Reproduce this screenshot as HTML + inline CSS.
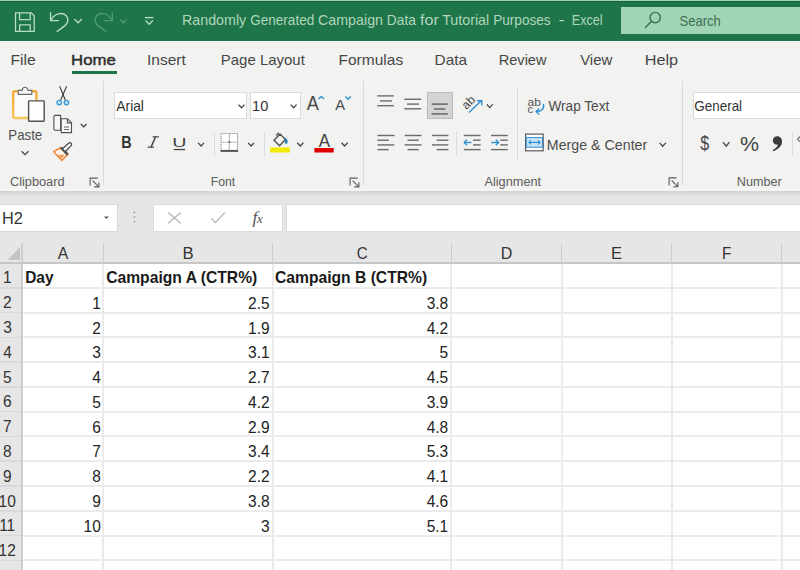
<!DOCTYPE html><html><head><meta charset="utf-8"><style>*{margin:0;padding:0;box-sizing:border-box}
html,body{width:800px;height:570px;overflow:hidden;background:#fff;font-family:"Liberation Sans",sans-serif}
svg{position:absolute;left:0;top:0;overflow:visible}
text{font-family:"Liberation Sans",sans-serif}</style></head><body>
<div style="position:absolute;left:0px;top:0px;width:800px;height:41px;background:#1e7548;"></div>
<div style="position:absolute;left:0px;top:0px;width:800px;height:1px;background:#9fd8b4;"></div>
<div style="position:absolute;left:0px;top:1px;width:800px;height:1px;background:#1a5e3a;"></div>
<div style="position:absolute;left:621px;top:7px;width:179px;height:27px;background:#a0d4b4;"></div>
<div style="position:absolute;left:0px;top:41px;width:800px;height:149.5px;background:#f2f2f1;"></div>
<div style="position:absolute;left:0px;top:188.8px;width:800px;height:1.6999999999999886px;background:#f7f7f5;"></div>
<div style="position:absolute;left:72px;top:71px;width:44.5px;height:3px;background:#1e7548;"></div>
<div style="position:absolute;left:103.0px;top:81px;width:1.0px;height:104px;background:#d9d9d9;"></div>
<div style="position:absolute;left:362.5px;top:81px;width:1.0px;height:104px;background:#d9d9d9;"></div>
<div style="position:absolute;left:682.0px;top:81px;width:1.0px;height:104px;background:#d9d9d9;"></div>
<div style="position:absolute;left:213.5px;top:132.5px;width:1.0px;height:23.0px;background:#dcdcdc;"></div>
<div style="position:absolute;left:263.5px;top:132px;width:1.0px;height:23.5px;background:#dcdcdc;"></div>
<div style="position:absolute;left:455.75px;top:131.75px;width:1.0px;height:24.25px;background:#dcdcdc;"></div>
<div style="position:absolute;left:516.5px;top:88px;width:1.0px;height:72px;background:#dcdcdc;"></div>
<div style="position:absolute;left:791.7px;top:131.5px;width:1.0px;height:23.25px;background:#dcdcdc;"></div>
<div style="position:absolute;left:114px;top:92px;width:133px;height:27px;background:#fff;border:1px solid #dadada"></div>
<div style="position:absolute;left:250px;top:92px;width:50.5px;height:27px;background:#fff;border:1px solid #dadada"></div>
<div style="position:absolute;left:692.75px;top:92px;width:109.25px;height:27px;background:#fff;border:1px solid #dadada"></div>
<div style="position:absolute;left:426.8px;top:91.9px;width:25.899999999999977px;height:27.599999999999994px;background:#d4d4d4;border:1px solid #b9b9b9"></div>
<div style="position:absolute;left:0px;top:190.5px;width:800px;height:52.5px;background:#e6e6e6;"></div>
<div style="position:absolute;left:0px;top:190.5px;width:800px;height:6.5px;background:linear-gradient(#d4d4d4,#e6e6e6);"></div>
<div style="position:absolute;left:-1px;top:203.5px;width:118.5px;height:28.5px;background:#fff;border:1px solid #d9d9d9"></div>
<div style="position:absolute;left:152.5px;top:203.5px;width:130.0px;height:28.5px;background:#fff;border:1px solid #dcdcdc"></div>
<div style="position:absolute;left:286px;top:203.5px;width:515px;height:28.5px;background:#fff;border:1px solid #dcdcdc"></div>
<div style="position:absolute;left:0px;top:243px;width:800px;height:20px;background:#e6e6e6;"></div>
<div style="position:absolute;left:0px;top:263px;width:22px;height:307px;background:#e6e6e6;"></div>
<div style="position:absolute;left:0px;top:286.97999999999996px;width:22px;height:1.6000000000000227px;background:#d9d9d9;"></div>
<div style="position:absolute;left:22px;top:286.78px;width:778px;height:2.0px;background:#ebebeb;"></div>
<div style="position:absolute;left:0px;top:311.76px;width:22px;height:1.6000000000000227px;background:#d9d9d9;"></div>
<div style="position:absolute;left:22px;top:311.56px;width:778px;height:2.0px;background:#ebebeb;"></div>
<div style="position:absolute;left:0px;top:336.54px;width:22px;height:1.6000000000000227px;background:#d9d9d9;"></div>
<div style="position:absolute;left:22px;top:336.34000000000003px;width:778px;height:2.0px;background:#ebebeb;"></div>
<div style="position:absolute;left:0px;top:361.32px;width:22px;height:1.6000000000000227px;background:#d9d9d9;"></div>
<div style="position:absolute;left:22px;top:361.12px;width:778px;height:2.0px;background:#ebebeb;"></div>
<div style="position:absolute;left:0px;top:386.09999999999997px;width:22px;height:1.6000000000000227px;background:#d9d9d9;"></div>
<div style="position:absolute;left:22px;top:385.9px;width:778px;height:2.0px;background:#ebebeb;"></div>
<div style="position:absolute;left:0px;top:410.88px;width:22px;height:1.6000000000000227px;background:#d9d9d9;"></div>
<div style="position:absolute;left:22px;top:410.68px;width:778px;height:2.0px;background:#ebebeb;"></div>
<div style="position:absolute;left:0px;top:435.66px;width:22px;height:1.6000000000000227px;background:#d9d9d9;"></div>
<div style="position:absolute;left:22px;top:435.46000000000004px;width:778px;height:2.0px;background:#ebebeb;"></div>
<div style="position:absolute;left:0px;top:460.44px;width:22px;height:1.6000000000000227px;background:#d9d9d9;"></div>
<div style="position:absolute;left:22px;top:460.24px;width:778px;height:2.0px;background:#ebebeb;"></div>
<div style="position:absolute;left:0px;top:485.21999999999997px;width:22px;height:1.6000000000000227px;background:#d9d9d9;"></div>
<div style="position:absolute;left:22px;top:485.02px;width:778px;height:2.0px;background:#ebebeb;"></div>
<div style="position:absolute;left:0px;top:510.0px;width:22px;height:1.6000000000000227px;background:#d9d9d9;"></div>
<div style="position:absolute;left:22px;top:509.8px;width:778px;height:2.0px;background:#ebebeb;"></div>
<div style="position:absolute;left:0px;top:534.7800000000001px;width:22px;height:1.599999999999909px;background:#d9d9d9;"></div>
<div style="position:absolute;left:22px;top:534.58px;width:778px;height:2.0px;background:#ebebeb;"></div>
<div style="position:absolute;left:0px;top:559.5600000000001px;width:22px;height:1.599999999999909px;background:#d9d9d9;"></div>
<div style="position:absolute;left:22px;top:559.36px;width:778px;height:2.0px;background:#ebebeb;"></div>
<div style="position:absolute;left:102px;top:263px;width:2px;height:307px;background:#ebebeb;"></div>
<div style="position:absolute;left:102.5px;top:244px;width:1.0px;height:18.5px;background:#cbcbcb;"></div>
<div style="position:absolute;left:271.5px;top:263px;width:2.0px;height:307px;background:#ebebeb;"></div>
<div style="position:absolute;left:272.0px;top:244px;width:1.0px;height:18.5px;background:#cbcbcb;"></div>
<div style="position:absolute;left:450px;top:263px;width:2px;height:307px;background:#ebebeb;"></div>
<div style="position:absolute;left:450.5px;top:244px;width:1.0px;height:18.5px;background:#cbcbcb;"></div>
<div style="position:absolute;left:560.5px;top:263px;width:2.0px;height:307px;background:#ebebeb;"></div>
<div style="position:absolute;left:561.0px;top:244px;width:1.0px;height:18.5px;background:#cbcbcb;"></div>
<div style="position:absolute;left:670.5px;top:263px;width:2.0px;height:307px;background:#ebebeb;"></div>
<div style="position:absolute;left:671.0px;top:244px;width:1.0px;height:18.5px;background:#cbcbcb;"></div>
<div style="position:absolute;left:780.5px;top:263px;width:2.0px;height:307px;background:#ebebeb;"></div>
<div style="position:absolute;left:781.0px;top:244px;width:1.0px;height:18.5px;background:#cbcbcb;"></div>
<div style="position:absolute;left:0px;top:262.2px;width:800px;height:1.6000000000000227px;background:#c6c6c6;"></div>
<div style="position:absolute;left:21.4px;top:243px;width:1.4000000000000021px;height:327px;background:#cdcdcd;"></div>
<svg width="800" height="570"><g fill="none" stroke="#b4dcc2" stroke-width="1.3"><path d="M15.5 12.8 H31.2 L34.2 15.8 V31.3 H15.5 Z"/><path d="M19.6 12.8 V19.6 H30.2 V12.8"/><path d="M19.6 31.3 V24.8 H30.2 V31.3"/></g><g fill="none" stroke="#b4dcc2" stroke-width="1.4" stroke-linecap="round" stroke-linejoin="round"><path d="M51.2 19.8 C54.5 13.8 62 11.5 66 15.5 C69 18.8 68.2 22.8 65 25.6 L57.2 31.4"/><path d="M50.6 12.8 V20.6 H58.4"/><path d="M74.8 19.4 L78.1 22.7 L81.4 19.4"/></g><g fill="none" stroke="#4e9a6f" stroke-width="1.4" stroke-linecap="round" stroke-linejoin="round"><path d="M111.8 19.8 C108.5 13.8 101 11.5 97 15.5 C94 18.8 94.8 22.8 98 25.6 L105.8 31.4"/><path d="M112.4 12.8 V20.6 H104.6"/><path d="M120.6 20 L123.3 22.7 L126 20"/></g><g fill="none" stroke="#b4dcc2" stroke-width="1.4"><path d="M145 17.6 H153.4"/><path d="M145.6 20.6 L149.2 24.2 L152.8 20.6"/></g><g fill="none" stroke="#3c6f52" stroke-width="1.4" stroke-linecap="round"><circle cx="655.2" cy="17.6" r="5.2"/><path d="M651.4 21.4 L645.4 27.4"/></g><defs><linearGradient id="og" x1="0" y1="0" x2="0" y2="1"><stop offset="0" stop-color="#f3a93a"/><stop offset="1" stop-color="#f7c65a"/></linearGradient></defs><rect x="13.2" y="91.2" width="23.2" height="26.8" rx="1.5" fill="#fbfbfb" stroke="url(#og)" stroke-width="2.4"/><path d="M18.2 94.4 V90.4 H22 C22.5 86.2 27.5 86.2 28 90.4 H31.8 V94.4 Z" fill="#f8f8f8" stroke="#6b6b6b" stroke-width="1.1" stroke-linejoin="round"/><rect x="28.6" y="100.9" width="15.6" height="20.3" rx="0.6" fill="#fdfdfd" stroke="#505050" stroke-width="1.4"/><g fill="none" stroke="#404040" stroke-width="1.1"><path d="M59.7 86.3 L65.5 100.5"/><path d="M66.6 86.3 L60.5 100.5"/></g><g fill="#cfe8f8" stroke="#3d9ad8" stroke-width="1.4"><circle cx="59.2" cy="102.6" r="2.2"/><circle cx="66.4" cy="102.6" r="2.2"/></g><g fill="#f6f6f6" stroke="#505050" stroke-width="1.1" stroke-linejoin="round"><path d="M55 115.4 H60.6 V130.2 H55 Q53.9 130.2 53.9 129.1 V116.5 Q53.9 115.4 55 115.4 Z"/><path d="M61.2 118.8 H67.6 L71.5 122.7 V132.6 H61.2 Z"/><path d="M67.4 118.8 V122.9 H71.5" fill="none"/></g><g stroke="#6a6a6a" stroke-width="1"><path d="M64 127 H69"/><path d="M64 129.5 H69"/></g><path d="M80.8 124 L83.7 126.9 L86.6 124" fill="none" stroke="#444" stroke-width="1.3"/><path d="M53.6 151.6 L61.2 147.4 L68 154.2 L61.6 160.4 Z" fill="#fdf3ea" stroke="#ee7f30" stroke-width="1.4" stroke-linejoin="round"/><path d="M57.5 155.2 L64.8 154.6 L61.6 158.6 Z" fill="#f39a45"/><path d="M60.8 147.6 L67.8 154.6" stroke="#4a4a4a" stroke-width="2.2" fill="none"/><path d="M65.6 151.2 L71.4 145.4 Q72.2 143.8 70.8 142.9 Q69.6 142.2 68.6 143.2 L62.8 148.4" fill="#f7f7f7" stroke="#4d4d4d" stroke-width="1.3" stroke-linejoin="round"/><path d="M21.6 151.3 L25 154.7 L28.4 151.3" fill="none" stroke="#444" stroke-width="1.3"/><g fill="none" stroke="#5a5a5a" stroke-width="1.1"><path d="M90.1 185.6 V178.1 H97.6"/><path d="M92.6 180.6 L98.6 186.6"/><path d="M98.89999999999999 182.2 V186.9 H94.19999999999999"/></g><g fill="none" stroke="#5a5a5a" stroke-width="1.1"><path d="M350.1 185.6 V178.1 H357.6"/><path d="M352.6 180.6 L358.6 186.6"/><path d="M358.90000000000003 182.2 V186.9 H354.20000000000005"/></g><g fill="none" stroke="#5a5a5a" stroke-width="1.1"><path d="M669.1 185.4 V177.9 H676.6"/><path d="M671.6 180.4 L677.6 186.4"/><path d="M677.9 182.0 V186.70000000000002 H673.2"/></g><path d="M238.5 104.6 L241.5 107.8 L244.5 104.6" fill="none" stroke="#444" stroke-width="1.3"/><path d="M290.6 104.6 L293.6 107.8 L296.6 104.6" fill="none" stroke="#444" stroke-width="1.3"/><path d="M318.6 99 L321.3 96.4 L324 99" fill="none" stroke="#2f93cc" stroke-width="1.4"/><path d="M345.4 96.6 L348.1 99.2 L350.8 96.6" fill="none" stroke="#2f93cc" stroke-width="1.4"/><rect x="173.8" y="148.9" width="11.3" height="1.3" fill="#444"/><path d="M198.2 142.9 L201.1 146 L204 142.9" fill="none" stroke="#444" stroke-width="1.3"/><rect x="220.6" y="133" width="17.4" height="18" fill="#fff"/><g stroke="#8e8e8e" stroke-width="1.1" stroke-dasharray="1.2 0.8" fill="none"><path d="M221.1 151 V133.5 H237.5 V151"/><path d="M229.3 133.5 V150"/><path d="M221.1 142.2 H237.5"/></g><rect x="220.5" y="149.9" width="17.6" height="2" fill="#555"/><circle cx="229.3" cy="142.2" r="1.1" fill="#707070"/><path d="M248.2 142.9 L251.1 146 L254 142.9" fill="none" stroke="#444" stroke-width="1.3"/><g fill="none" stroke="#505050" stroke-width="1.4" stroke-linejoin="round"><path d="M280 134 L285.5 139.5 L279.5 145.8 L274 140.3 Z"/><path d="M276.2 135.2 L279 132.8"/></g><path d="M284.6 137.6 C287.6 138.8 288.4 141.6 287 143.8 C286 144.2 285 143.6 285 142.6 Z" fill="#2b7fb8"/><rect x="270" y="147.5" width="20" height="5" fill="#f2ea00"/><path d="M297.2 142.8 L300.29999999999995 146 L303.4 142.8" fill="none" stroke="#444" stroke-width="1.3"/><rect x="314.4" y="148" width="19.3" height="4.5" fill="#e00000"/><path d="M341.6 142.8 L344.6 146 L347.6 142.8" fill="none" stroke="#444" stroke-width="1.3"/><rect x="377.3" y="95.20" width="16.50" height="1.4" fill="#6b6b6b"/><rect x="380" y="100.20" width="12.00" height="1.4" fill="#6b6b6b"/><rect x="377.3" y="105.00" width="16.50" height="1.4" fill="#6b6b6b"/><rect x="404.3" y="98.55" width="16.90" height="1.4" fill="#6b6b6b"/><rect x="407" y="103.40" width="12.00" height="1.4" fill="#6b6b6b"/><rect x="404.3" y="108.10" width="16.90" height="1.4" fill="#6b6b6b"/><rect x="431.6" y="103.40" width="16.20" height="1.4" fill="#5e5e5e"/><rect x="434" y="108.30" width="11.40" height="1.4" fill="#5e5e5e"/><rect x="431.6" y="113.20" width="16.20" height="1.4" fill="#5e5e5e"/><text x="0" y="0" font-size="12" fill="#444" transform="translate(466.5,110) rotate(-45)">ab</text><g stroke="#2f8fd0" stroke-width="1.4" fill="none"><path d="M469 112.6 L481.5 100.6"/><path d="M477 100.8 H481.8 V105.6"/></g><path d="M486.8 104.4 L489.70000000000005 107.6 L492.6 104.4" fill="none" stroke="#444" stroke-width="1.3"/><rect x="377.5" y="134.80" width="16.90" height="1.4" fill="#6b6b6b"/><rect x="377.5" y="139.50" width="11.25" height="1.4" fill="#6b6b6b"/><rect x="377.5" y="144.20" width="16.90" height="1.4" fill="#6b6b6b"/><rect x="377.5" y="148.90" width="11.25" height="1.4" fill="#6b6b6b"/><rect x="404.7" y="134.80" width="16.90" height="1.4" fill="#6b6b6b"/><rect x="407.5" y="139.50" width="11.25" height="1.4" fill="#6b6b6b"/><rect x="404.7" y="144.20" width="16.90" height="1.4" fill="#6b6b6b"/><rect x="407.5" y="148.90" width="11.25" height="1.4" fill="#6b6b6b"/><rect x="431.9" y="134.80" width="16.50" height="1.4" fill="#6b6b6b"/><rect x="436.6" y="139.50" width="11.80" height="1.4" fill="#6b6b6b"/><rect x="431.9" y="144.20" width="16.50" height="1.4" fill="#6b6b6b"/><rect x="436.6" y="148.90" width="11.80" height="1.4" fill="#6b6b6b"/><rect x="463.75" y="134.80" width="16.85" height="1.4" fill="#6b6b6b"/><rect x="473" y="139.50" width="7.60" height="1.4" fill="#6b6b6b"/><rect x="473" y="144.20" width="7.60" height="1.4" fill="#6b6b6b"/><rect x="463.75" y="148.90" width="16.85" height="1.4" fill="#6b6b6b"/><rect x="491" y="134.80" width="16.80" height="1.4" fill="#6b6b6b"/><rect x="500.3" y="139.50" width="7.50" height="1.4" fill="#6b6b6b"/><rect x="500.3" y="144.20" width="7.50" height="1.4" fill="#6b6b6b"/><rect x="491" y="148.90" width="16.80" height="1.4" fill="#6b6b6b"/><g stroke="#2f8fd0" stroke-width="1.4" fill="none"><path d="M464.2 142.5 H471.5"/><path d="M467 139.8 L464.3 142.5 L467 145.2"/><path d="M491.2 142.5 H498.5"/><path d="M495.8 139.8 L498.5 142.5 L495.8 145.2"/></g><text x="527.6" y="105.6" font-size="11.5" fill="#555" textLength="13.4" lengthAdjust="spacingAndGlyphs">ab</text><text x="527.6" y="113.4" font-size="11.5" fill="#555">c</text><g fill="none" stroke="#2f8fd0" stroke-width="1.4" stroke-linecap="round"><path d="M543.5 104.5 C544.5 109 541 111.5 536.5 111.5"/><path d="M538.8 109 L536.3 111.5 L538.8 114"/></g><rect x="525.6" y="134.1" width="17.6" height="16.7" fill="#fff" stroke="#5a5a5a" stroke-width="1.2"/><rect x="526.3" y="137.6" width="16.2" height="9.6" fill="#c9e4f6" stroke="#2f8fd0" stroke-width="1"/><g stroke="#2f8fd0" stroke-width="1.2" fill="none"><path d="M529 142.4 H540"/><path d="M531 140.4 L529 142.4 L531 144.4"/><path d="M538 140.4 L540 142.4 L538 144.4"/></g><path d="M659.6 142.9 L662.7 146.2 L665.8 142.9" fill="none" stroke="#444" stroke-width="1.3"/><path d="M723 142.2 L726.2 146.2 L729.4 142.2" fill="none" stroke="#444" stroke-width="1.3"/><path d="M777.3 136.2 C780.2 136.2 782 138.5 782 141.6 C782 146 778.5 149.6 773.2 151.2 L772.8 150 C775.8 148.6 777.6 146.8 778 144.6 C775 145 772.8 143 772.8 140.4 C772.8 138 774.8 136.2 777.3 136.2 Z" fill="#3a3a3a"/><path d="M800 136.5 L797.6 139.2 L800 141.9" fill="none" stroke="#777" stroke-width="1.3"/><path d="M104 216.5 H108.8 L106.4 219 Z" fill="#555"/><circle cx="134.4" cy="212.4" r="0.9" fill="#9a9a9a"/><circle cx="134.4" cy="217" r="0.9" fill="#9a9a9a"/><circle cx="134.4" cy="221.6" r="0.9" fill="#9a9a9a"/><g stroke="#b5b5b5" stroke-width="1.3" fill="none"><path d="M168.2 212.4 L180.8 223.2"/><path d="M180.8 212.4 L168.2 223.2"/><path d="M211.4 218.4 L215.4 222.6 L224.8 212.6"/></g><path d="M20 247.2 V260 H7.4 Z" fill="#c4c4c4"/><text x="181.97" y="24.60" font-size="15" fill="#afd6be" textLength="64.26" lengthAdjust="spacingAndGlyphs">Randomly</text><text x="250.22" y="24.60" font-size="15" fill="#afd6be" textLength="64.03" lengthAdjust="spacingAndGlyphs">Generated</text><text x="318.04" y="24.60" font-size="15" fill="#afd6be" textLength="64.96" lengthAdjust="spacingAndGlyphs">Campaign</text><text x="386.76" y="24.60" font-size="15" fill="#afd6be" textLength="29.14" lengthAdjust="spacingAndGlyphs">Data</text><text x="420.01" y="24.60" font-size="15" fill="#afd6be" textLength="18.83" lengthAdjust="spacingAndGlyphs">for</text><text x="442.18" y="24.60" font-size="15" fill="#afd6be" textLength="47.03" lengthAdjust="spacingAndGlyphs">Tutorial</text><text x="493.13" y="24.60" font-size="15" fill="#afd6be" textLength="57.55" lengthAdjust="spacingAndGlyphs">Purposes</text><text x="558.56" y="24.60" font-size="15" fill="#afd6be" textLength="6.25" lengthAdjust="spacingAndGlyphs">-</text><text x="571.76" y="24.60" font-size="15" fill="#afd6be" textLength="30.79" lengthAdjust="spacingAndGlyphs">Excel</text><text x="679.61" y="26.00" font-size="14.5" fill="#3e6e52" textLength="41.21" lengthAdjust="spacingAndGlyphs">Search</text><text x="10.46" y="64.50" font-size="15" fill="#474747" textLength="25.23" lengthAdjust="spacingAndGlyphs">File</text><text x="146.97" y="64.50" font-size="15" fill="#474747" textLength="38.77" lengthAdjust="spacingAndGlyphs">Insert</text><text x="220.77" y="64.50" font-size="15" fill="#474747" textLength="84.06" lengthAdjust="spacingAndGlyphs">Page Layout</text><text x="338.52" y="64.50" font-size="15" fill="#474747" textLength="64.62" lengthAdjust="spacingAndGlyphs">Formulas</text><text x="434.52" y="64.50" font-size="15" fill="#474747" textLength="32.67" lengthAdjust="spacingAndGlyphs">Data</text><text x="498.80" y="64.50" font-size="15" fill="#474747" textLength="47.65" lengthAdjust="spacingAndGlyphs">Review</text><text x="580.13" y="64.50" font-size="15" fill="#474747" textLength="32.13" lengthAdjust="spacingAndGlyphs">View</text><text x="644.66" y="64.50" font-size="15" fill="#474747" textLength="33.42" lengthAdjust="spacingAndGlyphs">Help</text><text x="71.11" y="64.50" font-size="15" fill="#2e2e2e" textLength="44.80" lengthAdjust="spacingAndGlyphs" stroke="#2e2e2e" stroke-width="0.45">Home</text><text x="9.96" y="186.20" font-size="12.3" fill="#5c5c5c" textLength="54.59" lengthAdjust="spacingAndGlyphs">Clipboard</text><text x="210.69" y="186.20" font-size="12.3" fill="#5c5c5c" textLength="24.41" lengthAdjust="spacingAndGlyphs">Font</text><text x="484.47" y="186.20" font-size="12.3" fill="#5c5c5c" textLength="56.62" lengthAdjust="spacingAndGlyphs">Alignment</text><text x="736.86" y="186.20" font-size="12.3" fill="#5c5c5c" textLength="44.95" lengthAdjust="spacingAndGlyphs">Number</text><text x="8.31" y="140.00" font-size="14.2" fill="#505050" textLength="33.89" lengthAdjust="spacingAndGlyphs">Paste</text><text x="116.37" y="111.20" font-size="14.2" fill="#333" textLength="27.57" lengthAdjust="spacingAndGlyphs">Arial</text><text x="252.11" y="111.20" font-size="14.2" fill="#333" textLength="16.23" lengthAdjust="spacingAndGlyphs">10</text><text x="306.70" y="109.80" font-size="19.5" fill="#4a4a4a" textLength="12.08" lengthAdjust="spacingAndGlyphs">A</text><text x="335.16" y="110.20" font-size="15" fill="#4a4a4a" textLength="9.87" lengthAdjust="spacingAndGlyphs">A</text><text x="121.23" y="147.60" font-size="16.5" fill="#333" textLength="10.42" lengthAdjust="spacingAndGlyphs" font-weight="bold">B</text><g stroke="#4a4a4a" fill="none"><path d="M155.6 136.8 L151 147.2" stroke-width="1.6"/><path d="M152.6 136.8 H159" stroke-width="1.2"/><path d="M147.6 147.2 H154" stroke-width="1.2"/></g><text x="172.27" y="146.60" font-size="13.5" fill="#444" textLength="14.25" lengthAdjust="spacingAndGlyphs">U</text><text x="318.71" y="146.90" font-size="18" fill="#404040" textLength="11.33" lengthAdjust="spacingAndGlyphs">A</text><text x="548.43" y="111.00" font-size="14" fill="#4d4d4d" textLength="60.87" lengthAdjust="spacingAndGlyphs">Wrap Text</text><text x="546.83" y="149.70" font-size="14.3" fill="#4d4d4d" textLength="100.41" lengthAdjust="spacingAndGlyphs">Merge &amp; Center</text><text x="694.33" y="111.20" font-size="14.3" fill="#333" textLength="47.78" lengthAdjust="spacingAndGlyphs">General</text><text x="700.14" y="150.20" font-size="17" fill="#444" textLength="8.92" lengthAdjust="spacingAndGlyphs" transform="translate(0 150.20) scale(1 1.22) translate(0 -150.20)">$</text><text x="740.00" y="151.00" font-size="21" fill="#444" textLength="19.03" lengthAdjust="spacingAndGlyphs">%</text><text x="2.05" y="224.00" font-size="16" fill="#333" textLength="20.88" lengthAdjust="spacingAndGlyphs">H2</text><text x="252.6" y="222.8" font-size="17.5" fill="#555" style="font-family:Liberation Serif" font-style="italic">f<tspan font-size="13.5" dx="-0.8" dy="0.6">x</tspan></text><text x="57.86" y="259.10" font-size="15.5" fill="#333" textLength="10.57" lengthAdjust="spacingAndGlyphs" transform="translate(0 259.10) scale(1 1.05) translate(0 -259.10)">A</text><text x="182.62" y="259.10" font-size="15.5" fill="#333" textLength="11.15" lengthAdjust="spacingAndGlyphs" transform="translate(0 259.10) scale(1 1.05) translate(0 -259.10)">B</text><text x="356.64" y="259.10" font-size="15.5" fill="#333" textLength="10.92" lengthAdjust="spacingAndGlyphs" transform="translate(0 259.10) scale(1 1.05) translate(0 -259.10)">C</text><text x="500.68" y="259.10" font-size="15.5" fill="#333" textLength="11.58" lengthAdjust="spacingAndGlyphs" transform="translate(0 259.10) scale(1 1.05) translate(0 -259.10)">D</text><text x="610.94" y="259.10" font-size="15.5" fill="#333" textLength="11.00" lengthAdjust="spacingAndGlyphs" transform="translate(0 259.10) scale(1 1.05) translate(0 -259.10)">E</text><text x="721.99" y="259.10" font-size="15.5" fill="#333" textLength="9.34" lengthAdjust="spacingAndGlyphs" transform="translate(0 259.10) scale(1 1.05) translate(0 -259.10)">F</text><text x="2.89" y="283.50" font-size="15.5" fill="#333" textLength="8.62" lengthAdjust="spacingAndGlyphs" transform="translate(0 283.50) scale(1 1.08) translate(0 -283.50)">1</text><text x="3.10" y="308.28" font-size="15.5" fill="#333" textLength="8.62" lengthAdjust="spacingAndGlyphs" transform="translate(0 308.28) scale(1 1.08) translate(0 -308.28)">2</text><text x="3.14" y="333.06" font-size="15.5" fill="#333" textLength="8.62" lengthAdjust="spacingAndGlyphs" transform="translate(0 333.06) scale(1 1.08) translate(0 -333.06)">3</text><text x="3.14" y="357.84" font-size="15.5" fill="#333" textLength="8.62" lengthAdjust="spacingAndGlyphs" transform="translate(0 357.84) scale(1 1.08) translate(0 -357.84)">4</text><text x="3.10" y="382.62" font-size="15.5" fill="#333" textLength="8.62" lengthAdjust="spacingAndGlyphs" transform="translate(0 382.62) scale(1 1.08) translate(0 -382.62)">5</text><text x="3.04" y="407.40" font-size="15.5" fill="#333" textLength="8.62" lengthAdjust="spacingAndGlyphs" transform="translate(0 407.40) scale(1 1.08) translate(0 -407.40)">6</text><text x="3.10" y="432.18" font-size="15.5" fill="#333" textLength="8.62" lengthAdjust="spacingAndGlyphs" transform="translate(0 432.18) scale(1 1.08) translate(0 -432.18)">7</text><text x="3.10" y="456.96" font-size="15.5" fill="#333" textLength="8.62" lengthAdjust="spacingAndGlyphs" transform="translate(0 456.96) scale(1 1.08) translate(0 -456.96)">8</text><text x="3.08" y="481.74" font-size="15.5" fill="#333" textLength="8.62" lengthAdjust="spacingAndGlyphs" transform="translate(0 481.74) scale(1 1.08) translate(0 -481.74)">9</text><text x="-1.49" y="506.52" font-size="15.5" fill="#333" textLength="17.24" lengthAdjust="spacingAndGlyphs" transform="translate(0 506.52) scale(1 1.08) translate(0 -506.52)">10</text><text x="-0.85" y="531.30" font-size="15.5" fill="#333" textLength="16.09" lengthAdjust="spacingAndGlyphs" transform="translate(0 531.30) scale(1 1.08) translate(0 -531.30)">11</text><text x="-1.40" y="556.08" font-size="15.5" fill="#333" textLength="17.24" lengthAdjust="spacingAndGlyphs" transform="translate(0 556.08) scale(1 1.08) translate(0 -556.08)">12</text><text x="-1.45" y="605.64" font-size="15.5" fill="#333" textLength="17.24" lengthAdjust="spacingAndGlyphs" transform="translate(0 605.64) scale(1 1.08) translate(0 -605.64)">13</text><text x="25.20" y="283.00" font-size="15.5" fill="#1a1a1a" textLength="28.40" lengthAdjust="spacingAndGlyphs" font-weight="bold" transform="translate(0 283.00) scale(1 1.06) translate(0 -283.00)">Day</text><text x="106.17" y="283.00" font-size="15.5" fill="#1a1a1a" textLength="151.12" lengthAdjust="spacingAndGlyphs" font-weight="bold" transform="translate(0 283.00) scale(1 1.06) translate(0 -283.00)">Campaign A (CTR%)</text><text x="274.97" y="283.00" font-size="15.5" fill="#1a1a1a" textLength="152.21" lengthAdjust="spacingAndGlyphs" font-weight="bold" transform="translate(0 283.00) scale(1 1.06) translate(0 -283.00)">Campaign B (CTR%)</text><text x="92.18" y="308.78" font-size="15.5" fill="#222" textLength="8.62" lengthAdjust="spacingAndGlyphs" transform="translate(0 308.78) scale(1 1.08) translate(0 -308.78)">1</text><text x="248.05" y="308.78" font-size="15.5" fill="#222" textLength="21.55" lengthAdjust="spacingAndGlyphs" transform="translate(0 308.78) scale(1 1.08) translate(0 -308.78)">2.5</text><text x="426.65" y="308.78" font-size="15.5" fill="#222" textLength="21.55" lengthAdjust="spacingAndGlyphs" transform="translate(0 308.78) scale(1 1.08) translate(0 -308.78)">3.8</text><text x="92.18" y="333.56" font-size="15.5" fill="#222" textLength="8.62" lengthAdjust="spacingAndGlyphs" transform="translate(0 333.56) scale(1 1.08) translate(0 -333.56)">2</text><text x="248.05" y="333.56" font-size="15.5" fill="#222" textLength="21.55" lengthAdjust="spacingAndGlyphs" transform="translate(0 333.56) scale(1 1.08) translate(0 -333.56)">1.9</text><text x="426.65" y="333.56" font-size="15.5" fill="#222" textLength="21.55" lengthAdjust="spacingAndGlyphs" transform="translate(0 333.56) scale(1 1.08) translate(0 -333.56)">4.2</text><text x="92.18" y="358.34" font-size="15.5" fill="#222" textLength="8.62" lengthAdjust="spacingAndGlyphs" transform="translate(0 358.34) scale(1 1.08) translate(0 -358.34)">3</text><text x="248.05" y="358.34" font-size="15.5" fill="#222" textLength="21.55" lengthAdjust="spacingAndGlyphs" transform="translate(0 358.34) scale(1 1.08) translate(0 -358.34)">3.1</text><text x="439.58" y="358.34" font-size="15.5" fill="#222" textLength="8.62" lengthAdjust="spacingAndGlyphs" transform="translate(0 358.34) scale(1 1.08) translate(0 -358.34)">5</text><text x="92.18" y="383.12" font-size="15.5" fill="#222" textLength="8.62" lengthAdjust="spacingAndGlyphs" transform="translate(0 383.12) scale(1 1.08) translate(0 -383.12)">4</text><text x="248.05" y="383.12" font-size="15.5" fill="#222" textLength="21.55" lengthAdjust="spacingAndGlyphs" transform="translate(0 383.12) scale(1 1.08) translate(0 -383.12)">2.7</text><text x="426.65" y="383.12" font-size="15.5" fill="#222" textLength="21.55" lengthAdjust="spacingAndGlyphs" transform="translate(0 383.12) scale(1 1.08) translate(0 -383.12)">4.5</text><text x="92.18" y="407.90" font-size="15.5" fill="#222" textLength="8.62" lengthAdjust="spacingAndGlyphs" transform="translate(0 407.90) scale(1 1.08) translate(0 -407.90)">5</text><text x="248.05" y="407.90" font-size="15.5" fill="#222" textLength="21.55" lengthAdjust="spacingAndGlyphs" transform="translate(0 407.90) scale(1 1.08) translate(0 -407.90)">4.2</text><text x="426.65" y="407.90" font-size="15.5" fill="#222" textLength="21.55" lengthAdjust="spacingAndGlyphs" transform="translate(0 407.90) scale(1 1.08) translate(0 -407.90)">3.9</text><text x="92.18" y="432.68" font-size="15.5" fill="#222" textLength="8.62" lengthAdjust="spacingAndGlyphs" transform="translate(0 432.68) scale(1 1.08) translate(0 -432.68)">6</text><text x="248.05" y="432.68" font-size="15.5" fill="#222" textLength="21.55" lengthAdjust="spacingAndGlyphs" transform="translate(0 432.68) scale(1 1.08) translate(0 -432.68)">2.9</text><text x="426.65" y="432.68" font-size="15.5" fill="#222" textLength="21.55" lengthAdjust="spacingAndGlyphs" transform="translate(0 432.68) scale(1 1.08) translate(0 -432.68)">4.8</text><text x="92.18" y="457.46" font-size="15.5" fill="#222" textLength="8.62" lengthAdjust="spacingAndGlyphs" transform="translate(0 457.46) scale(1 1.08) translate(0 -457.46)">7</text><text x="248.05" y="457.46" font-size="15.5" fill="#222" textLength="21.55" lengthAdjust="spacingAndGlyphs" transform="translate(0 457.46) scale(1 1.08) translate(0 -457.46)">3.4</text><text x="426.65" y="457.46" font-size="15.5" fill="#222" textLength="21.55" lengthAdjust="spacingAndGlyphs" transform="translate(0 457.46) scale(1 1.08) translate(0 -457.46)">5.3</text><text x="92.18" y="482.24" font-size="15.5" fill="#222" textLength="8.62" lengthAdjust="spacingAndGlyphs" transform="translate(0 482.24) scale(1 1.08) translate(0 -482.24)">8</text><text x="248.05" y="482.24" font-size="15.5" fill="#222" textLength="21.55" lengthAdjust="spacingAndGlyphs" transform="translate(0 482.24) scale(1 1.08) translate(0 -482.24)">2.2</text><text x="426.65" y="482.24" font-size="15.5" fill="#222" textLength="21.55" lengthAdjust="spacingAndGlyphs" transform="translate(0 482.24) scale(1 1.08) translate(0 -482.24)">4.1</text><text x="92.18" y="507.02" font-size="15.5" fill="#222" textLength="8.62" lengthAdjust="spacingAndGlyphs" transform="translate(0 507.02) scale(1 1.08) translate(0 -507.02)">9</text><text x="248.05" y="507.02" font-size="15.5" fill="#222" textLength="21.55" lengthAdjust="spacingAndGlyphs" transform="translate(0 507.02) scale(1 1.08) translate(0 -507.02)">3.8</text><text x="426.65" y="507.02" font-size="15.5" fill="#222" textLength="21.55" lengthAdjust="spacingAndGlyphs" transform="translate(0 507.02) scale(1 1.08) translate(0 -507.02)">4.6</text><text x="83.56" y="531.80" font-size="15.5" fill="#222" textLength="17.24" lengthAdjust="spacingAndGlyphs" transform="translate(0 531.80) scale(1 1.08) translate(0 -531.80)">10</text><text x="260.98" y="531.80" font-size="15.5" fill="#222" textLength="8.62" lengthAdjust="spacingAndGlyphs" transform="translate(0 531.80) scale(1 1.08) translate(0 -531.80)">3</text><text x="426.65" y="531.80" font-size="15.5" fill="#222" textLength="21.55" lengthAdjust="spacingAndGlyphs" transform="translate(0 531.80) scale(1 1.08) translate(0 -531.80)">5.1</text></svg>
</body></html>
